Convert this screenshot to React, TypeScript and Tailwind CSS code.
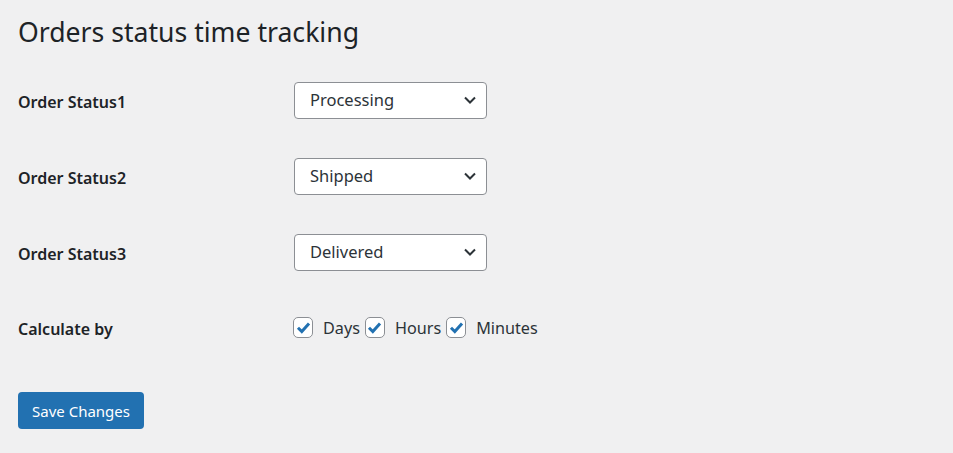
import React from 'react';

const statuses = [
  { label: 'Order Status1', value: 'Processing' },
  { label: 'Order Status2', value: 'Shipped' },
  { label: 'Order Status3', value: 'Delivered' },
];

function Chevron() {
  return (
    <svg width="14" height="14" viewBox="0 0 14 14" className="absolute right-[9px] top-1/2 -translate-y-1/2">
      <path d="M2 4.5 L7 9.5 L12 4.5" fill="none" stroke="#2c3338" strokeWidth="2" />
    </svg>
  );
}

function Check({ label }: { label: string }) {
  return (
    <label className="flex items-center">
      <span className="w-[20px] h-[21px] rounded-[5px] border border-[#8c8f94] bg-white flex items-center justify-center">
        <svg width="17" height="17" viewBox="0 0 16 16">
          <path d="M2.8 8.2 L6.4 11.8 L13.2 4.2" fill="none" stroke="#2271b1" strokeWidth="2.8" strokeLinejoin="miter" />
        </svg>
      </span>
      <span className="ml-[10px] mr-[5px] pt-[1px]">{label}</span>
    </label>
  );
}

export default function App() {
  return (
    <div className="min-h-screen w-full bg-[#f0f0f1] text-[#1d2327] pl-[18px]" style={{ fontFamily: '"Noto Sans", "Open Sans", sans-serif' }}>
      <div className="h-[62px] pt-[14px]">
        <h1 className="text-[26.6px] leading-[36px] font-normal text-[#1d2327]">Orders status time tracking</h1>
      </div>

      {statuses.map(s => (
        <div key={s.label} className="flex items-center h-[76px]">
          <div className="w-[276px] text-[16px] font-semibold text-[#1d2327] pt-[4px]">{s.label}</div>
          <div className="relative w-[193px] h-[37px] bg-white border border-[#8c8f94] rounded-[4px] flex items-center pl-[15px] pt-[1px] text-[16.5px] text-[#2c3338]">
            {s.value}
            <Chevron />
          </div>
        </div>
      ))}

      <div className="flex items-center h-[76px]">
        <div className="w-[275px] text-[16px] font-semibold text-[#1d2327] pt-[1px]">Calculate by</div>
        <div className="flex items-center text-[16.2px] text-[#2c3338]">
          <Check label="Days" />
          <Check label="Hours" />
          <Check label="Minutes" />
        </div>
      </div>

      <button className="mt-[26px] w-[126px] h-[37px] rounded-[4px] bg-[#2271b1] text-white text-[15px] pt-[2px]">
        Save Changes
      </button>
    </div>
  );
}
